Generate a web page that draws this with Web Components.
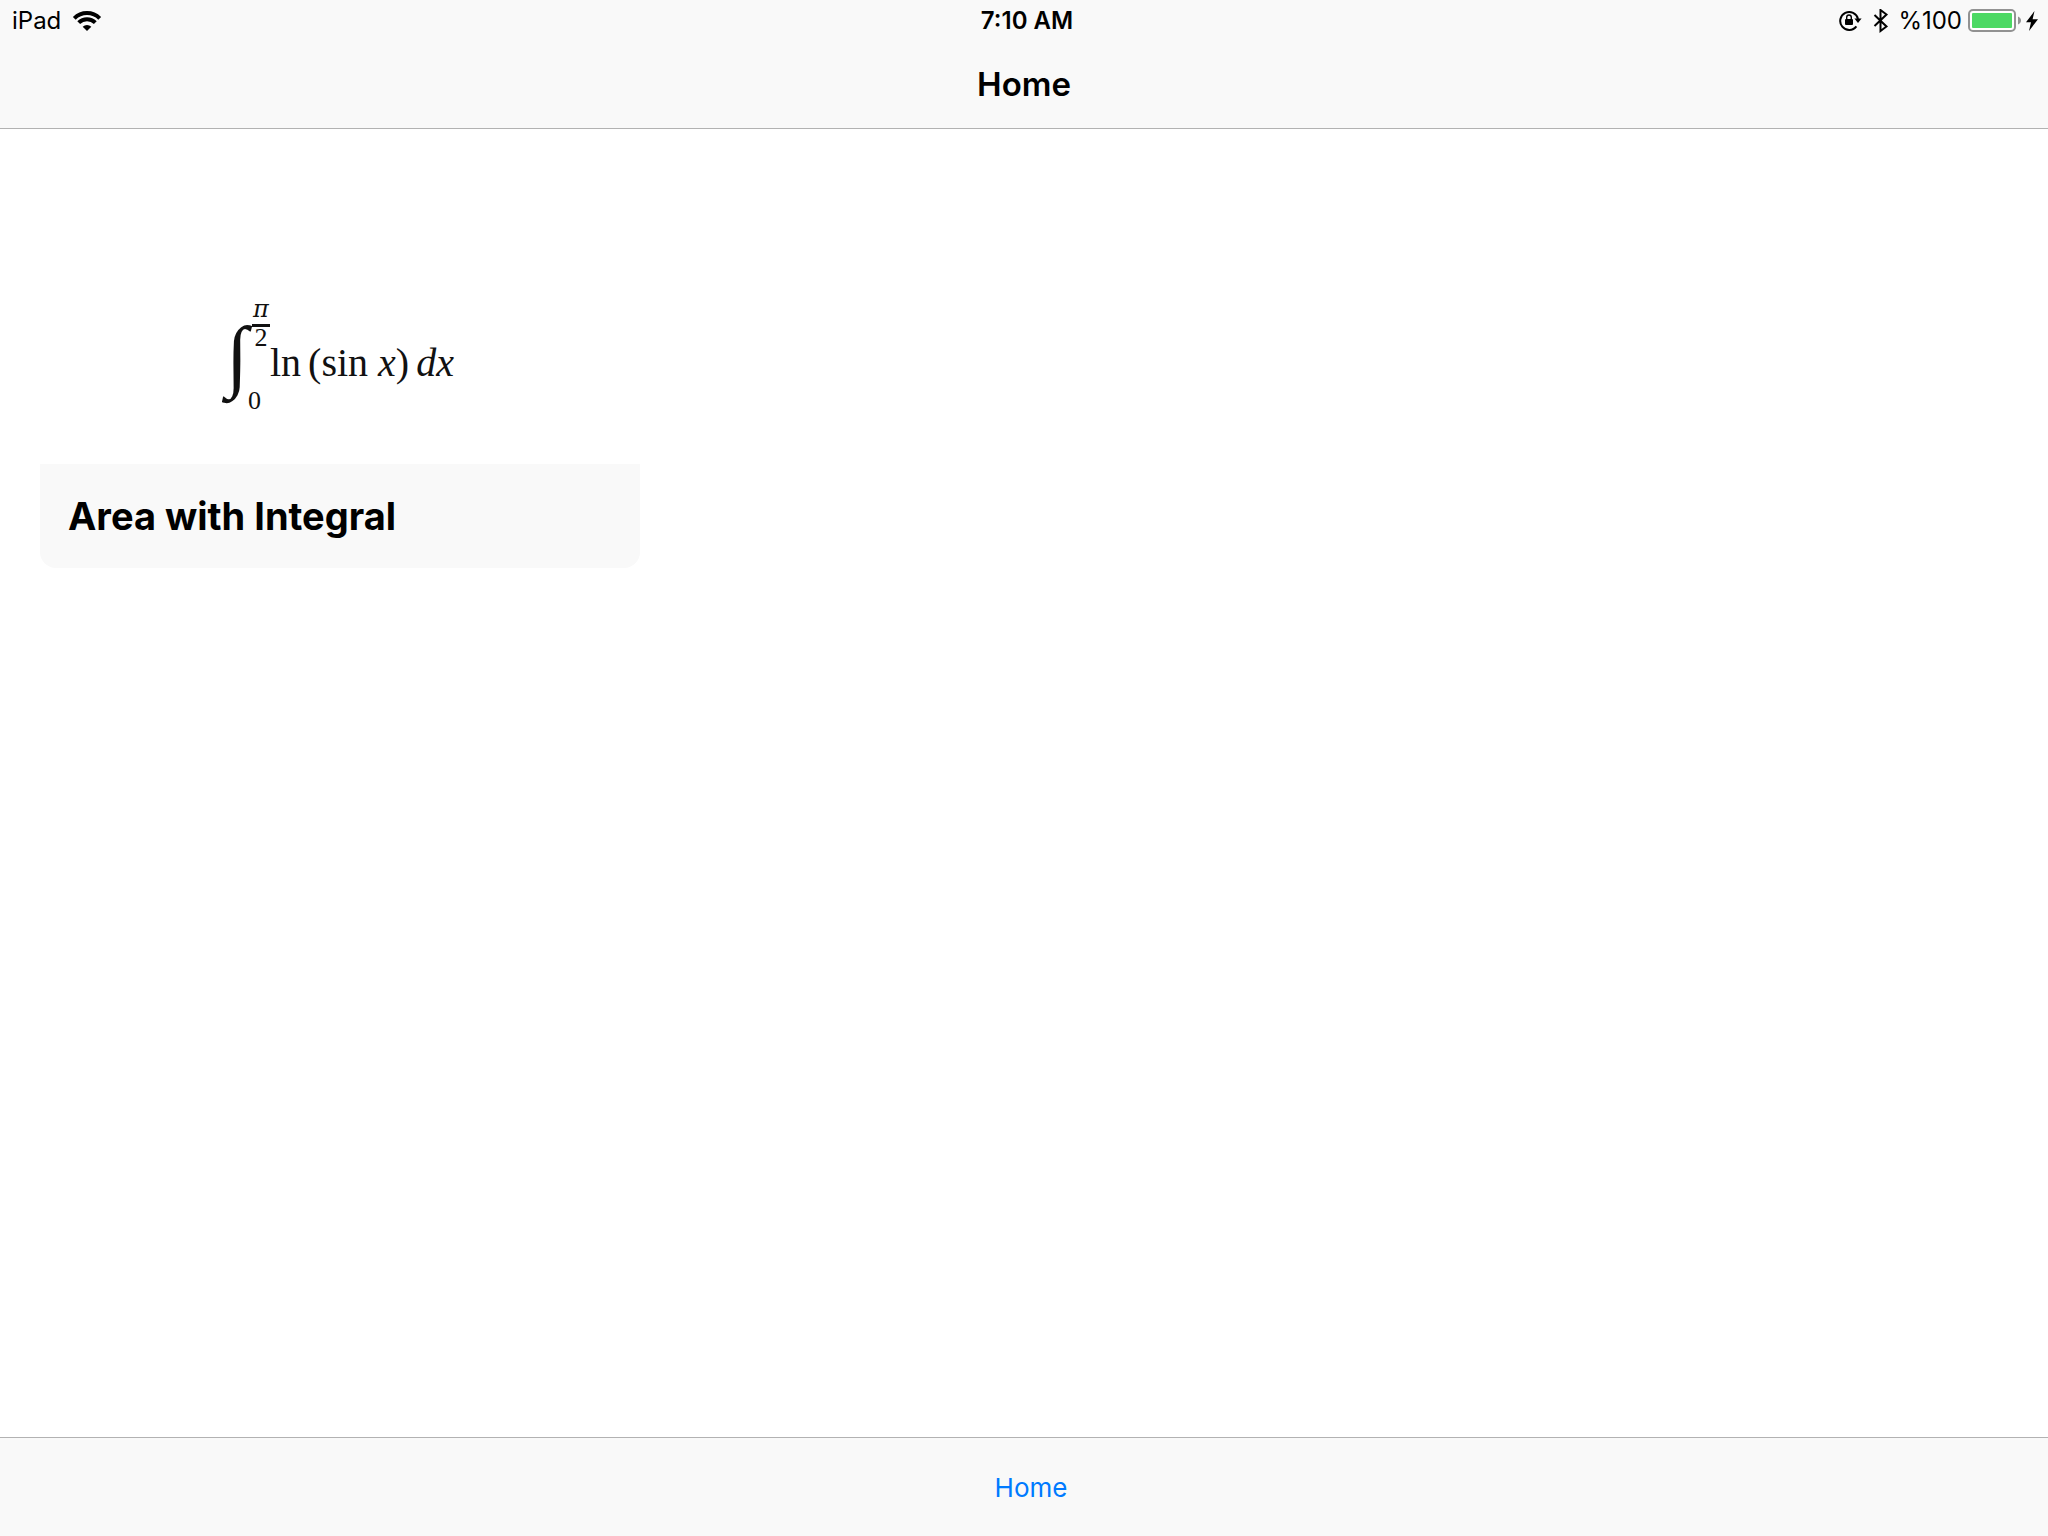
<!DOCTYPE html>
<html lang="en">
<head>
<meta charset="utf-8">
<meta name="viewport" content="width=device-width, initial-scale=1">
<title>Home</title>
<style>
  :root {
    --bar-bg: #f9f9f9;
    --bar-line: #b2b2b2;
    --tint: #007aff;
  }
  body {
    margin: 0;
    background: #fff;
    color: #000;
    font-family: Inter, "Liberation Sans", sans-serif;
  }
</style>
</head>
<body>
<app-screen>
  <status-bar slot="top" device="iPad" time="7:10 AM" battery="%100"></status-bar>
  <nav-bar slot="top">Home</nav-bar>
  <lesson-card>
    <integral-formula slot="cover"></integral-formula>
    Area with Integral
  </lesson-card>
  <tab-bar slot="bottom"><a href="#home">Home</a></tab-bar>
</app-screen>

<script>
// Status bar glyphs, drawn in currentColor.
const ICONS = {
  wifi: `<svg width="30" height="22" viewBox="0 0 30 22"><g fill="none" stroke="currentColor" stroke-width="4"><path d="M2.3 8.3a18 18 0 0 1 25.4 0"/><path d="M6.7 12.7a11.8 11.8 0 0 1 16.6 0"/></g><path d="M10.7 16.7a6.1 6.1 0 0 1 8.6 0L15 21z" fill="currentColor"/></svg>`,
  lock: `<svg width="24" height="22" viewBox="0 0 24 22"><path d="M17.4 16.4A9 9 0 1 1 19 9" fill="none" stroke="currentColor" stroke-width="2"/><path d="M15.4 8.6h7.2L19 13z" fill="currentColor"/><rect x="6" y="9" width="8" height="6" rx="1" fill="currentColor"/><path d="M7.7 9.5V7.3a2.3 2.3 0 0 1 4.6 0v2.2" fill="none" stroke="currentColor" stroke-width="1.4"/></svg>`,
  bluetooth: `<svg width="16" height="24" viewBox="0 0 16 24"><path d="M1.5 6l12 11.5-6 4.5V1l6 4.5L1.5 17" fill="none" stroke="currentColor" stroke-width="2"/></svg>`,
  battery: `<svg width="54" height="24" viewBox="0 0 54 24"><rect x="1" y="1" width="46" height="21" rx="4" fill="#fff" stroke="#929292" stroke-width="2"/><rect x="4" y="4" width="40" height="15" rx="1" fill="#4cd964"/><path d="M50 7.5c4 1.5 4 6.5 0 8z" fill="#929292"/></svg>`,
  bolt: `<svg width="12" height="20" viewBox="0 0 12 20"><path d="M8.5 0L0 11.3h5L3 20l9-11.8H6.6z" fill="currentColor"/></svg>`,
};

class AppScreen extends HTMLElement {
  constructor() {
    super();
    this.attachShadow({ mode: 'open' }).innerHTML = `
<style>
  :host { display: flex; flex-direction: column; min-height: 100vh; }
  header { background: var(--bar-bg); border-bottom: 1px solid var(--bar-line); }
  main {
    flex: 1;
    display: grid;
    grid-template-columns: repeat(auto-fill, 600px);
    justify-content: space-between;
    align-content: start;
    gap: 40px;
    padding: 39px 40px;
  }
</style>
<header><slot name="top"></slot></header>
<main><slot></slot></main>
<slot name="bottom"></slot>`;
  }
}

class StatusBar extends HTMLElement {
  connectedCallback() {
    if (this.shadowRoot) return;
    this.attachShadow({ mode: 'open' }).innerHTML = `
<style>
  :host {
    display: grid;
    grid-template-columns: 1fr auto 1fr;
    align-items: center;
    padding: 0 10px 0 12px;
    font-size: 24px;
    line-height: 40px;
  }
  div { display: flex; align-items: center; }
  span, time { padding-top: 1px; }
  svg { display: block; flex: none; }
  .left { gap: 11px; }
  .right { justify-content: flex-end; gap: 6px; }
  .flags { gap: 10px; margin-right: 3px; }
  .power { gap: 4px; }
  time { font-weight: 600; padding-left: 4px; }
</style>
<div class="left"><span>${this.getAttribute('device')}</span>${ICONS.wifi}</div>
<time>${this.getAttribute('time')}</time>
<div class="right">
  <div class="flags">${ICONS.lock}${ICONS.bluetooth}</div>
  <span>${this.getAttribute('battery')}</span>
  <div class="power">${ICONS.battery}${ICONS.bolt}</div>
</div>`;
  }
}

class NavBar extends HTMLElement {
  constructor() {
    super();
    this.attachShadow({ mode: 'open' }).innerHTML = `
<style>
  :host { display: block; }
  h1 { margin: 0; font-size: 33px; font-weight: 600; line-height: 87px; text-align: center; }
</style>
<h1><slot></slot></h1>`;
  }
}

class LessonCard extends HTMLElement {
  constructor() {
    super();
    this.attachShadow({ mode: 'open' }).innerHTML = `
<style>
  :host { display: block; border-radius: 16px; overflow: hidden; background: #fff; }
  .cover {
    display: flex;
    justify-content: center;
    align-items: flex-end;
    box-sizing: border-box;
    height: 296px;
    padding-bottom: 52px;
  }
  h2 {
    margin: 0;
    padding: 0 28px;
    background: var(--bar-bg);
    font-size: 38px;
    font-weight: 700;
    line-height: 104px;
  }
</style>
<div class="cover"><slot name="cover"></slot></div>
<h2><slot></slot></h2>`;
  }
}

// Definite integral: sign, stacked limits, then the integrand.
class IntegralFormula extends HTMLElement {
  constructor() {
    super();
    this.attachShadow({ mode: 'open' }).innerHTML = `
<style>
  :host {
    display: flex;
    align-items: flex-end;
    font-family: "Liberation Serif", serif;
    font-size: 40px;
    line-height: 40px;
    color: #111;
    white-space: nowrap;
  }
  .sign { font-size: 80px; line-height: 114px; }
  .limits {
    display: flex;
    flex-direction: column;
    justify-content: space-between;
    height: 115px;
    font-size: 26px;
    line-height: 22px;
  }
  .upper { margin-left: 4px; text-align: center; }
  .upper span { display: block; }
  .numerator {
    min-width: 18px;
    padding-bottom: 3px;
    border-bottom: 3px solid #111;
    font-family: "DejaVu Serif", serif;
    font-size: 24px;
    line-height: 24px;
    font-style: italic;
  }
  .body { display: flex; gap: 7px; padding-bottom: 29px; }
</style>
<span class="sign">∫</span>
<span class="limits">
  <span class="upper"><span class="numerator">π</span><span>2</span></span>
  <span>0</span>
</span>
<span class="body"><span>ln</span><span>(sin <i>x</i>)</span><i>dx</i></span>`;
  }
}

class TabBar extends HTMLElement {
  constructor() {
    super();
    this.attachShadow({ mode: 'open' }).innerHTML = `
<style>
  :host {
    display: block;
    background: var(--bar-bg);
    border-top: 1px solid var(--bar-line);
  }
  nav { display: flex; justify-content: center; padding: 2px 0 0 14px; }
  ::slotted(a) {
    color: var(--tint);
    font-size: 26px;
    line-height: 96px;
    text-decoration: none;
  }
</style>
<nav><slot></slot></nav>`;
  }
}

customElements.define('app-screen', AppScreen);
customElements.define('status-bar', StatusBar);
customElements.define('nav-bar', NavBar);
customElements.define('lesson-card', LessonCard);
customElements.define('integral-formula', IntegralFormula);
customElements.define('tab-bar', TabBar);
</script>
</body>
</html>
